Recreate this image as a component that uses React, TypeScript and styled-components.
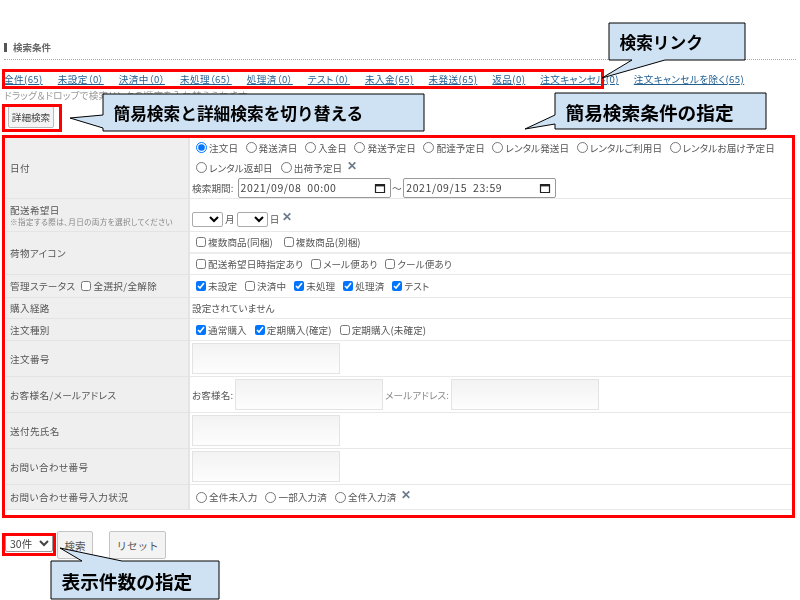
import * as React from 'react';
import styled, { createGlobalStyle } from 'styled-components';

const GlobalStyle = createGlobalStyle`
  html, body {
    margin: 0;
    padding: 0;
    background: #fff;
  }
  body {
    font-family: "Noto Sans CJK JP", "Noto Sans", sans-serif;
    font-size: 9.6px;
    color: #555;
  }
`;

const Page = styled.div`
  position: relative;
  width: 800px;
  height: 600px;
  overflow: hidden;
  background: #fff;
`;

const Content = styled.div`
  padding: 41px 5px 0 4px;
  filter: blur(0.4px);
`;

const Heading = styled.div`
  display: flex;
  align-items: center;
  gap: 6px;
  height: 12px;
  padding-bottom: 6px;
  border-bottom: 1px dotted #aaa;
  margin-right: -1px;
  font-size: 9.5px;
  font-weight: 700;
  color: #666;
  &::before {
    content: '';
    width: 3px;
    height: 9px;
    background: #555;
  }
`;

const LinkRow = styled.div`
  display: flex;
  gap: 15px;
  margin-top: 12px;
  height: 14px;
  line-height: 14px;
  font-feature-settings: 'palt';
  letter-spacing: 0.4px;
`;

const SearchLink = styled.a`
  color: #1f5f92;
  text-decoration: underline;
  white-space: nowrap;
`;

const Hint = styled.div`
  height: 14px;
  margin-top: 2px;
  line-height: 14px;
  color: #999;
  font-feature-settings: 'palt';
  letter-spacing: 0.25px;
`;

const ToggleButton = styled.button`
  display: block;
  width: 46px;
  height: 22px;
  margin: 4px 0 0 4px;
  padding: 0;
  border: 1px solid #bbb;
  border-radius: 2px;
  background: #f4f4f4;
  font: inherit;
  color: #444;
`;

const FormTable = styled.table`
  width: 786px;
  margin: 8px 0 0 2px;
  border-collapse: collapse;
  table-layout: fixed;
`;

const Row = styled.tr<{ $h: number }>`
  height: ${p => p.$h}px;
`;

const LabelCell = styled.th`
  width: 178px;
  padding: 0 0 0 4px;
  border: 1px solid #e4e4e4;
  border-width: 1px 2px 1px 0;
  background: #efefef;
  font-weight: 400;
  text-align: left;
  color: #555;
  font-feature-settings: 'palt';
  letter-spacing: 0.35px;
`;

const LabelNote = styled.div`
  font-size: 7.6px;
  line-height: 10px;
  color: #888;
`;

const LabelMain = styled.div`
  line-height: 13px;
`;

const ValueCell = styled.td<{ $flush?: boolean }>`
  padding: ${p => (p.$flush ? '0' : '0 0 0 2px')};
  border-top: 1px solid #e8e8e8;
  border-bottom: 1px solid #e8e8e8;
  font-feature-settings: 'palt';
  letter-spacing: 0.1px;
`;

const Line = styled.div<{ $h?: number; $gap?: number; $divider?: boolean; $inset?: boolean; $drop?: number }>`
  display: flex;
  align-items: center;
  gap: ${p => p.$gap ?? 4}px;
  ${p => (p.$h ? `height: ${p.$h}px;` : '')}
  ${p => (p.$divider ? 'border-bottom: 2px solid #ececec;' : '')}
  ${p => (p.$inset ? 'padding-left: 2px;' : '')}
  ${p => (p.$drop ? `padding-top: ${p.$drop}px;` : '')}
  white-space: nowrap;
`;

const Option = styled.label`
  display: inline-flex;
  align-items: center;
  gap: 2px;
  white-space: nowrap;
`;

const Radio = styled.input.attrs({ type: 'radio' })`
  width: 11px;
  height: 11px;
  margin: 0 0 0 4px;
`;

const Check = styled.input.attrs({ type: 'checkbox' })<{ $flat?: boolean }>`
  width: 10px;
  height: 10px;
  margin: 0 0 0 ${p => (p.$flat ? 0 : 4)}px;
`;

const ClearMark = styled.span`
  color: #6d7a8a;
  font-size: 12px;
  font-weight: 700;
  line-height: 10px;
  margin: -6px 0 0 1px;
`;

const PeriodLabel = styled.span`
  margin-right: 2.5px;
`;

const DateBox = styled.div`
  display: flex;
  align-items: center;
  justify-content: space-between;
  box-sizing: border-box;
  width: 153px;
  height: 20px;
  padding: 0 4px 0 2px;
  border: 1px solid #999;
  border-radius: 2px;
  font-size: 10.5px;
  letter-spacing: 0.6px;
  white-space: pre;
  color: #444;
`;

const SmallSelect = styled.select`
  width: 31px;
  height: 15px;
  padding: 0;
  border: 1px solid #aaa;
  border-radius: 2px;
  background: #fff;
  font: inherit;
`;

const TextField = styled.div`
  box-sizing: border-box;
  width: 148px;
  height: 31px;
  border: 1px solid #e3e3e3;
  background: linear-gradient(#f3f3f3, #fdfdfd);
`;

const MailLabel = styled.span`
  color: #888;
`;

const Footer = styled.div`
  display: flex;
  align-items: flex-start;
  margin-top: 21px;
  height: 29px;
  padding-left: 1px;
`;

const CountSelect = styled.select`
  width: 48px;
  height: 18px;
  margin-top: 3px;
  padding: 0;
  border: 1px solid #999;
  border-radius: 2px;
  background: #fff;
  font: inherit;
  font-size: 10.5px;
  color: #444;
`;

const ActionButton = styled.button<{ $w: number; $ml: number }>`
  width: ${p => p.$w}px;
  height: 28px;
  margin-left: ${p => p.$ml}px;
  padding: 0;
  border: 1px solid #c4c4c4;
  border-radius: 2px;
  background: #f3f3f3;
  font: inherit;
  font-size: 10.5px;
  color: #555;
`;

// red highlight frames drawn over the form
const RedFrame = styled.div<{ $l: number; $t: number; $w: number; $h: number }>`
  position: absolute;
  left: ${p => p.$l}px;
  top: ${p => p.$t}px;
  width: ${p => p.$w}px;
  height: ${p => p.$h}px;
  box-sizing: border-box;
  border: 3px solid #fe0000;
`;

const CalloutLayer = styled.svg`
  position: absolute;
  left: 0;
  top: 0;
`;

const CalloutText = styled.div<{ $l: number; $t: number; $w: number; $h: number; $size: number }>`
  position: absolute;
  left: ${p => p.$l}px;
  top: ${p => p.$t}px;
  width: ${p => p.$w}px;
  height: ${p => p.$h}px;
  box-sizing: border-box;
  padding-left: 10.5px;
  display: flex;
  align-items: center;
  font-size: ${p => p.$size}px;
  font-weight: 700;
  color: #000;
  white-space: nowrap;
`;

const links = [
  '全件(65)',
  '未設定（0）',
  '決済中（0）',
  '未処理（65）',
  '処理済（0）',
  'テスト（0）',
  '未入金(65)',
  '未発送(65)',
  '返品(0)',
  '注文キャンセル(0)',
  '注文キャンセルを除く(65)'
];

const callouts = [
  {
    label: '検索リンク',
    points: '609,23 745,23 745,60 665,60 602,78 632,60 609,60',
    box: { l: 609, t: 23, w: 136, h: 37 },
    size: 16.7
  },
  {
    label: '簡易検索と詳細検索を切り替える',
    points: '103,94 424,94 424,131 103,131 103,128 70,118 103,115',
    box: { l: 103, t: 94, w: 321, h: 37 },
    size: 16.7
  },
  {
    label: '簡易検索条件の指定',
    points: '555,93 766,93 766,129 555,129 555,124 525,129 555,115',
    box: { l: 555, t: 93, w: 211, h: 36 },
    size: 18.7
  },
  {
    label: '表示件数の指定',
    points: '51,561 82,561 60,548 122,561 219,561 219,599 51,599',
    box: { l: 51, t: 561, w: 168, h: 38 },
    size: 18.7
  }
];

const CalendarIcon = () => (
  <svg width="12" height="12" viewBox="0 0 12 12">
    <path d="M1.5 2.5h9v8h-9z" fill="none" stroke="#222" strokeWidth="1.2" />
    <path d="M1.5 2h9v2.4h-9z" fill="#222" />
  </svg>
);

const RadioOption = (props: { label: string; checked?: boolean }) => (
  <Option>
    <Radio name="date_type" defaultChecked={props.checked} />
    {props.label}
  </Option>
);

const CheckOption = (props: { label: string; checked?: boolean }) => (
  <Option>
    <Check defaultChecked={props.checked} />
    {props.label}
  </Option>
);

export default function App() {
  return (
    <Page>
      <GlobalStyle />
      <Content>
        <Heading>検索条件</Heading>
        <LinkRow>
          {links.map(link => (
            <SearchLink key={link}>{link}</SearchLink>
          ))}
        </LinkRow>
        <Hint>ドラッグ＆ドロップで検索リンクの順序を入れ替えられます</Hint>
        <ToggleButton>詳細検索</ToggleButton>
        <FormTable>
          <tbody>
            <Row $h={62}>
              <LabelCell>日付</LabelCell>
              <ValueCell>
                <Line $h={20} $gap={3.5}>
                  <RadioOption label="注文日" checked />
                  <RadioOption label="発送済日" />
                  <RadioOption label="入金日" />
                  <RadioOption label="発送予定日" />
                  <RadioOption label="配達予定日" />
                  <RadioOption label="レンタル発送日" />
                  <RadioOption label="レンタルご利用日" />
                  <RadioOption label="レンタルお届け予定日" />
                </Line>
                <Line $h={20}>
                  <RadioOption label="レンタル返却日" />
                  <RadioOption label="出荷予定日" />
                  <ClearMark>✕</ClearMark>
                </Line>
                <Line $h={20} $gap={1.5}>
                  <PeriodLabel>検索期間:</PeriodLabel>
                  <DateBox>
                    {'2021/09/08  00:00'}
                    <CalendarIcon />
                  </DateBox>
                  <span>〜</span>
                  <DateBox>
                    {'2021/09/15  23:59'}
                    <CalendarIcon />
                  </DateBox>
                </Line>
              </ValueCell>
            </Row>
            <Row $h={33}>
              <LabelCell>
                <LabelMain>配送希望日</LabelMain>
                <LabelNote>※指定する際は、月日の両方を選択してください</LabelNote>
              </LabelCell>
              <ValueCell>
                <Line $gap={2} $drop={8}>
                  <SmallSelect />
                  月
                  <SmallSelect />
                  日
                  <ClearMark>✕</ClearMark>
                </Line>
              </ValueCell>
            </Row>
            <Row $h={42}>
              <LabelCell>荷物アイコン</LabelCell>
              <ValueCell $flush>
                <Line $h={20} $gap={7} $divider $inset>
                  <CheckOption label="複数商品(同梱)" />
                  <CheckOption label="複数商品(別梱)" />
                </Line>
                <Line $h={20} $inset>
                  <CheckOption label="配送希望日時指定あり" />
                  <CheckOption label="メール便あり" />
                  <CheckOption label="クール便あり" />
                </Line>
              </ValueCell>
            </Row>
            <Row $h={23}>
              <LabelCell>
                <Line $gap={6}>
                  管理ステータス
                  <Option>
                    <Check $flat />
                    全選択/全解除
                  </Option>
                </Line>
              </LabelCell>
              <ValueCell>
                <Line>
                  <CheckOption label="未設定" checked />
                  <CheckOption label="決済中" />
                  <CheckOption label="未処理" checked />
                  <CheckOption label="処理済" checked />
                  <CheckOption label="テスト" checked />
                </Line>
              </ValueCell>
            </Row>
            <Row $h={21}>
              <LabelCell>購入経路</LabelCell>
              <ValueCell>設定されていません</ValueCell>
            </Row>
            <Row $h={22}>
              <LabelCell>注文種別</LabelCell>
              <ValueCell>
                <Line>
                  <CheckOption label="通常購入" checked />
                  <CheckOption label="定期購入(確定)" checked />
                  <CheckOption label="定期購入(未確定)" />
                </Line>
              </ValueCell>
            </Row>
            <Row $h={36}>
              <LabelCell>注文番号</LabelCell>
              <ValueCell>
                <TextField />
              </ValueCell>
            </Row>
            <Row $h={36}>
              <LabelCell>お客様名/メールアドレス</LabelCell>
              <ValueCell>
                <Line $gap={2}>
                  お客様名:
                  <TextField />
                  <MailLabel>メールアドレス:</MailLabel>
                  <TextField />
                </Line>
              </ValueCell>
            </Row>
            <Row $h={36}>
              <LabelCell>送付先氏名</LabelCell>
              <ValueCell>
                <TextField />
              </ValueCell>
            </Row>
            <Row $h={36}>
              <LabelCell>お問い合わせ番号</LabelCell>
              <ValueCell>
                <TextField />
              </ValueCell>
            </Row>
            <Row $h={25}>
              <LabelCell>お問い合わせ番号入力状況</LabelCell>
              <ValueCell>
                <Line>
                  <RadioOption label="全件未入力" />
                  <RadioOption label="一部入力済" />
                  <RadioOption label="全件入力済" />
                  <ClearMark>✕</ClearMark>
                </Line>
              </ValueCell>
            </Row>
          </tbody>
        </FormTable>
        <Footer>
          <CountSelect defaultValue="30">
            <option value="30">30件</option>
          </CountSelect>
          <ActionButton $w={36} $ml={4}>検索</ActionButton>
          <ActionButton $w={57} $ml={16}>リセット</ActionButton>
        </Footer>
      </Content>

      <RedFrame $l={2} $t={69} $w={602} $h={20} />
      <RedFrame $l={2} $t={104} $w={60} $h={28} />
      <RedFrame $l={2} $t={135} $w={793} $h={383} />
      <RedFrame $l={2} $t={533} $w={54} $h={23} />

      <CalloutLayer width="800" height="600" viewBox="0 0 800 600">
        {callouts.map(callout => (
          <polygon
            key={callout.label}
            points={callout.points}
            fill="#cfe2f3"
            stroke="#000"
            strokeWidth="1"
          />
        ))}
      </CalloutLayer>
      {callouts.map(callout => (
        <CalloutText
          key={callout.label}
          $l={callout.box.l}
          $t={callout.box.t}
          $w={callout.box.w}
          $h={callout.box.h}
          $size={callout.size}
        >
          {callout.label}
        </CalloutText>
      ))}
    </Page>
  );
}
